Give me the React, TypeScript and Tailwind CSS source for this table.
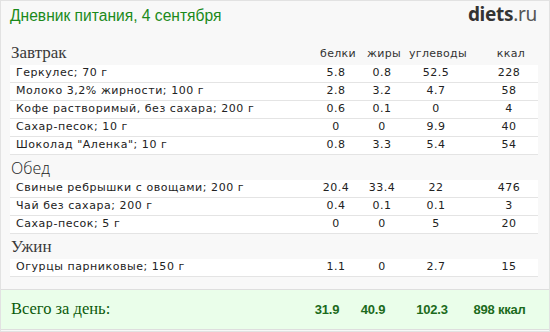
import React from 'react';

type Item = { name: string; p: string; f: string; c: string; k: string };
type Meal = { title: string; serif: boolean; items: Item[] };

const meals: Meal[] = [
  {
    title: 'Завтрак',
    serif: true,
    items: [
      { name: 'Геркулес; 70 г', p: '5.8', f: '0.8', c: '52.5', k: '228' },
      { name: 'Молоко 3,2% жирности; 100 г', p: '2.8', f: '3.2', c: '4.7', k: '58' },
      { name: 'Кофе растворимый, без сахара; 200 г', p: '0.6', f: '0.1', c: '0', k: '4' },
      { name: 'Сахар-песок; 10 г', p: '0', f: '0', c: '9.9', k: '40' },
      { name: 'Шоколад "Аленка"; 10 г', p: '0.8', f: '3.3', c: '5.4', k: '54' },
    ],
  },
  {
    title: 'Обед',
    serif: false,
    items: [
      { name: 'Свиные ребрышки с овощами; 200 г', p: '20.4', f: '33.4', c: '22', k: '476' },
      { name: 'Чай без сахара; 200 г', p: '0.4', f: '0.1', c: '0.1', k: '3' },
      { name: 'Сахар-песок; 5 г', p: '0', f: '0', c: '5', k: '20' },
    ],
  },
  {
    title: 'Ужин',
    serif: true,
    items: [{ name: 'Огурцы парниковые; 150 г', p: '1.1', f: '0', c: '2.7', k: '15' }],
  },
];

function Cols({ p, f, c, k }: { p: string; f: string; c: string; k: string }) {
  return (
    <>
      <div className="w-[50px] text-center">{p}</div>
      <div className="w-[42px] text-center">{f}</div>
      <div className="w-[66px] text-center">{c}</div>
      <div className="w-[69px] pl-[11px] text-center">{k}</div>
    </>
  );
}

export default function App() {
  return (
    <div className="w-[550px] h-[332px] bg-[#f8f8f8] border border-[#e2e2e2] flex flex-col overflow-hidden">
      <div className="h-[39px] flex items-start justify-between pl-[9px] pr-[12px]">
        <div className="mt-[5px] text-[15.6px] text-[#1b8a1b] font-['Liberation_Sans',sans-serif] leading-[20px]">
          Дневник питания, 4 сентября
        </div>
        <div className="mt-[1px] text-[19px] leading-[24px] text-[#333] font-['Noto_Sans',sans-serif] tracking-[-0.3px]">
          <span className="font-bold">diets</span>
          <span className="text-[#555]">.ru</span>
        </div>
      </div>

      <div className="flex-1 px-[9px]">
        {meals.map((m, i) => (
          <div key={m.title}>
            <div className="h-[25px] flex items-end pb-[1px] text-[#333]">
              <div
                className={
                  m.serif
                    ? "flex-1 pl-[1px] text-[17px] leading-[22px] font-['Liberation_Serif',serif] text-[#3a3a3a]"
                    : "flex-1 pl-[1px] text-[16px] leading-[22px] font-['Open_Sans',sans-serif] font-light text-[#222]"
                }
              >
                {m.title}
              </div>
              {i === 0 && (
                <div className="flex text-[11px] leading-[20px] tracking-[0.3px] font-['DejaVu_Sans',sans-serif] text-[#333]">
                  <Cols p="белки" f="жиры" c="углеводы" k="ккал" />
                </div>
              )}
            </div>
            {m.items.map((it) => (
              <div
                key={it.name}
                className="h-[18px] mr-[2px] flex items-center bg-white border-b border-[#e4e4e4] text-[11px] font-['DejaVu_Sans',sans-serif] text-[#222]"
              >
                <div className="flex-1 pl-[6px] tracking-[0.55px]">{it.name}</div>
                <div className="flex tracking-[0.5px]">
                  <Cols p={it.p} f={it.f} c={it.c} k={it.k} />
                </div>
              </div>
            ))}
          </div>
        ))}
      </div>

      <div className="h-[41px] mb-[1px] bg-[#eafeea] border-t border-b border-[#dedede] flex items-center px-[9px]">
        <div className="flex-1 pl-[1px] text-[16.5px] font-['Liberation_Serif',serif] text-[#0b5a0b]">
          Всего за день:
        </div>
        <div className="flex mr-[11px] text-[13px] font-bold tracking-[-0.2px] font-['Liberation_Sans',sans-serif] text-[#1c6b1c]">
          <div className="w-[50px] text-center">31.9</div>
          <div className="w-[42px] text-center">40.9</div>
          <div className="w-[76px] text-center">102.3</div>
          <div className="w-[59px] text-center">898 ккал</div>
        </div>
      </div>
    </div>
  );
}
